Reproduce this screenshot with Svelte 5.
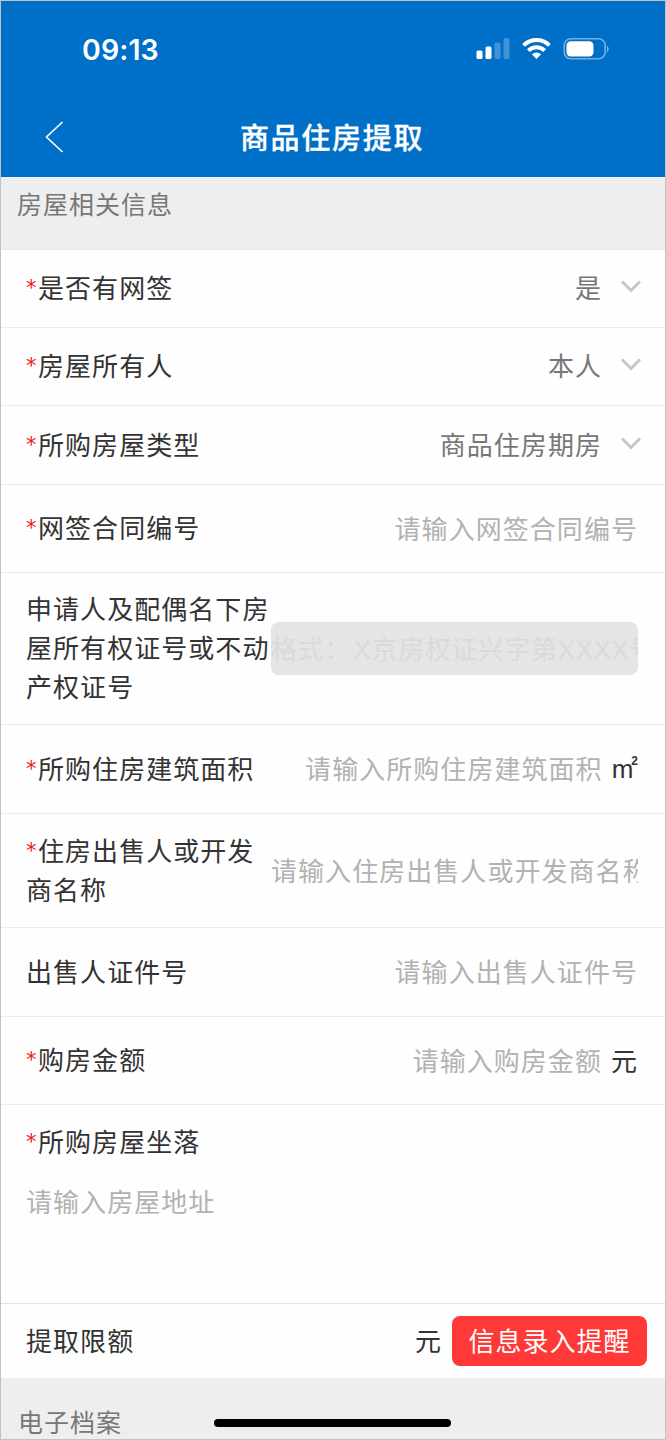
<script lang="ts">
    type Field = {
        label: string;
        required?: boolean;
        kind: "select" | "input" | "locked";
        text: string;
        unit?: string;
        height: number;
    };

    const fields: Field[] = [
        { label: "是否有网签", required: true, kind: "select", text: "是", height: 78 },
        { label: "房屋所有人", required: true, kind: "select", text: "本人", height: 78 },
        { label: "所购房屋类型", required: true, kind: "select", text: "商品住房期房", height: 79 },
        { label: "网签合同编号", required: true, kind: "input", text: "请输入网签合同编号", height: 88 },
        {
            label: "申请人及配偶名下房屋所有权证号或不动产权证号",
            kind: "locked",
            text: "格式： X京房权证兴字第XXXX号",
            height: 152,
        },
        { label: "所购住房建筑面积", required: true, kind: "input", text: "请输入所购住房建筑面积", unit: "m²", height: 89 },
        { label: "住房出售人或开发商名称", required: true, kind: "input", text: "请输入住房出售人或开发商名称", height: 114 },
        { label: "出售人证件号", kind: "input", text: "请输入出售人证件号", height: 89 },
        { label: "购房金额", required: true, kind: "input", text: "请输入购房金额", unit: "元", height: 88 },
    ];
</script>

<div class="screen">
    <header>
        <div class="status">
            <span class="time">09:13</span>
            <svg class="indicators" width="134" height="24" viewBox="0 0 134 24" fill="#fff">
                <rect x="0.5" y="13.5" width="6" height="8.5" rx="1.6" />
                <rect x="9.5" y="9.5" width="6" height="12.5" rx="1.6" />
                <rect x="18.5" y="5.5" width="6" height="16.5" rx="1.6" opacity="0.25" />
                <rect x="27.5" y="1" width="6" height="21" rx="1.6" opacity="0.25" />
                <g fill="none" stroke="#fff" stroke-width="4">
                    <path d="M47.6 8.4 A18.2 18.2 0 0 1 73.4 8.4" />
                    <path d="M52.4 13.7 A11.5 11.5 0 0 1 68.6 13.7" />
                </g>
                <path d="M60.5 22 L55.9 17.3 A6.5 6.5 0 0 1 65.1 17.3 Z" />
                <rect x="88.2" y="1.8" width="41" height="20" rx="6.5" fill="none" stroke="#fff" stroke-width="1.6" opacity="0.45" />
                <rect x="90.5" y="4.2" width="27" height="15.4" rx="4.2" />
                <path d="M131 8.5 A4.5 4.5 0 0 1 131 15.5 Z" opacity="0.5" />
            </svg>
        </div>
        <nav>
            <button type="button" class="back" aria-label="返回">
                <svg width="20" height="34" viewBox="0 0 20 34" fill="none" stroke="#fff" stroke-width="1.6">
                    <path d="M18.5 2 L2.5 17 L18.5 32" />
                </svg>
            </button>
            <h1>商品住房提取</h1>
        </nav>
    </header>

    <h2 class="section">房屋相关信息</h2>

    {#each fields as f (f.label)}
        <div class="row {f.kind}" style:height="{f.height}px">
            <div class="label">
                {#if f.required}<span class="star">*</span>{/if}{f.label}
            </div>
            <div class="value"><span class="text">{f.text}</span></div>
            {#if f.unit === "m²"}
                <span class="unit area">m<sup>2</sup></span>
            {:else if f.unit}
                <span class="unit">{f.unit}</span>
            {/if}
            {#if f.kind === "select"}
                <svg class="chevron" width="20" height="14" viewBox="0 0 20 14" fill="none" stroke="#c6c6c6" stroke-width="3">
                    <path d="M1 1.5 L10 10.5 L19 1.5" />
                </svg>
            {/if}
        </div>
    {/each}

    <div class="address">
        <div class="label"><span class="star">*</span>所购房屋坐落</div>
        <div class="placeholder">请输入房屋地址</div>
    </div>

    <div class="limit">
        <div class="label">提取限额</div>
        <span class="unit">元</span>
        <button type="button" class="remind">信息录入提醒</button>
    </div>

    <h2 class="section archive">电子档案</h2>
    <div class="home-bar"></div>
</div>

<style>
    :global(body) {
        background: #fff;
    }

    .screen {
        position: relative;
        display: flex;
        flex-direction: column;
        box-sizing: border-box;
        width: 666px;
        height: 1440px;
        overflow: hidden;
        border: 1px solid #c2c2c2;
        background: #fefefe;
        color: #333;
        font-family: "Noto Sans CJK SC", sans-serif;
        font-size: 26px;
        line-height: 39px;
        letter-spacing: 1.05px;
    }

    header {
        flex: none;
        height: 176px;
        margin-top: -1px;
        border-top: 1px solid #8fbfe6;
        background: #006fc8;
        color: #fff;
    }

    .status {
        display: flex;
        align-items: center;
        justify-content: space-between;
        height: 96px;
        padding: 0 55px 0 81px;
    }

    .time {
        font-family: Inter, sans-serif;
        font-size: 28.5px;
        font-weight: 600;
        letter-spacing: 0.1px;
    }

    nav {
        display: grid;
        grid-template-columns: 80px 1fr 80px;
        align-items: center;
        height: 80px;
    }

    .back {
        display: flex;
        padding: 0 0 0 43px;
        border: 0;
        background: none;
    }

    h1 {
        margin: -2px 0 0 -2px;
        font-size: 29px;
        font-weight: 500;
        letter-spacing: 1.7px;
        text-align: center;
        -webkit-text-stroke: 0.3px #fff;
    }

    .section {
        flex: none;
        box-sizing: border-box;
        height: 73px;
        margin: 0;
        padding: 7px 16px;
        border-bottom: 1px solid #e6e6e6;
        background: #eee;
        color: #777;
        font-size: 25px;
        font-weight: 400;
        letter-spacing: 1px;
    }

    .row,
    .limit {
        display: flex;
        flex: none;
        align-items: center;
        box-sizing: border-box;
        padding: 0 27px 3px 25px;
        border-bottom: 1px solid #ebebeb;
    }

    .label {
        flex: none;
        width: 245px;
        margin-top: -1px;
    }

    .star {
        display: inline-block;
        width: 12px;
        color: #f01818;
        font-family: "DejaVu Sans", sans-serif;
        font-size: 21px;
        line-height: 20px;
        letter-spacing: 0;
        vertical-align: 3px;
    }

    .value {
        display: flex;
        flex: 1;
        justify-content: flex-end;
        min-width: 0;
        overflow: hidden;
        color: #b2b2b2;
        white-space: nowrap;
    }

    .input .text,
    .locked .text {
        min-width: 0;
        overflow: hidden;
    }

    .select .value {
        color: #777;
    }

    .select .text {
        margin-top: -1px;
    }

    .chevron {
        margin: 0 -3px 0 19px;
    }

    .locked .value {
        justify-content: flex-start;
        height: 53px;
        margin-top: 3px;
        border-radius: 8px;
        background: #e6e4e5;
        color: #dadadb;
        font-family: "Liberation Sans", "Noto Sans CJK SC", sans-serif;
        line-height: 57px;
        letter-spacing: 0.6px;
        word-spacing: -5px;
    }

    .unit {
        margin-left: 9px;
    }

    .area {
        display: flex;
        margin-top: 3px;
        font-family: "Liberation Sans", sans-serif;
        letter-spacing: 0;
    }

    .area sup {
        margin: -2px 0 0 -2px;
        font-size: 12px;
        font-weight: 700;
        line-height: 26px;
    }

    .address {
        flex: none;
        box-sizing: border-box;
        height: 199px;
        padding: 17px 25px 0;
        border-bottom: 1px solid #e3e3e3;
    }

    .placeholder {
        margin-top: 21px;
        color: #b2b2b2;
    }

    .limit {
        height: 74px;
        padding-right: 18px;
        border-bottom: 0;
    }

    .limit .unit {
        margin-left: auto;
    }

    .remind {
        width: 195px;
        height: 50px;
        margin: 3px 0 0 10px;
        padding: 0 0 4px;
        border: 0;
        border-radius: 8px;
        background: #ff3838;
        color: #fff;
        font: inherit;
        letter-spacing: 1px;
    }

    .archive {
        padding: 24px 17px;
        border-bottom: 0;
    }

    .home-bar {
        position: absolute;
        bottom: 12px;
        left: 213px;
        width: 237px;
        height: 8px;
        border-radius: 4px;
        background: #000;
    }
</style>
